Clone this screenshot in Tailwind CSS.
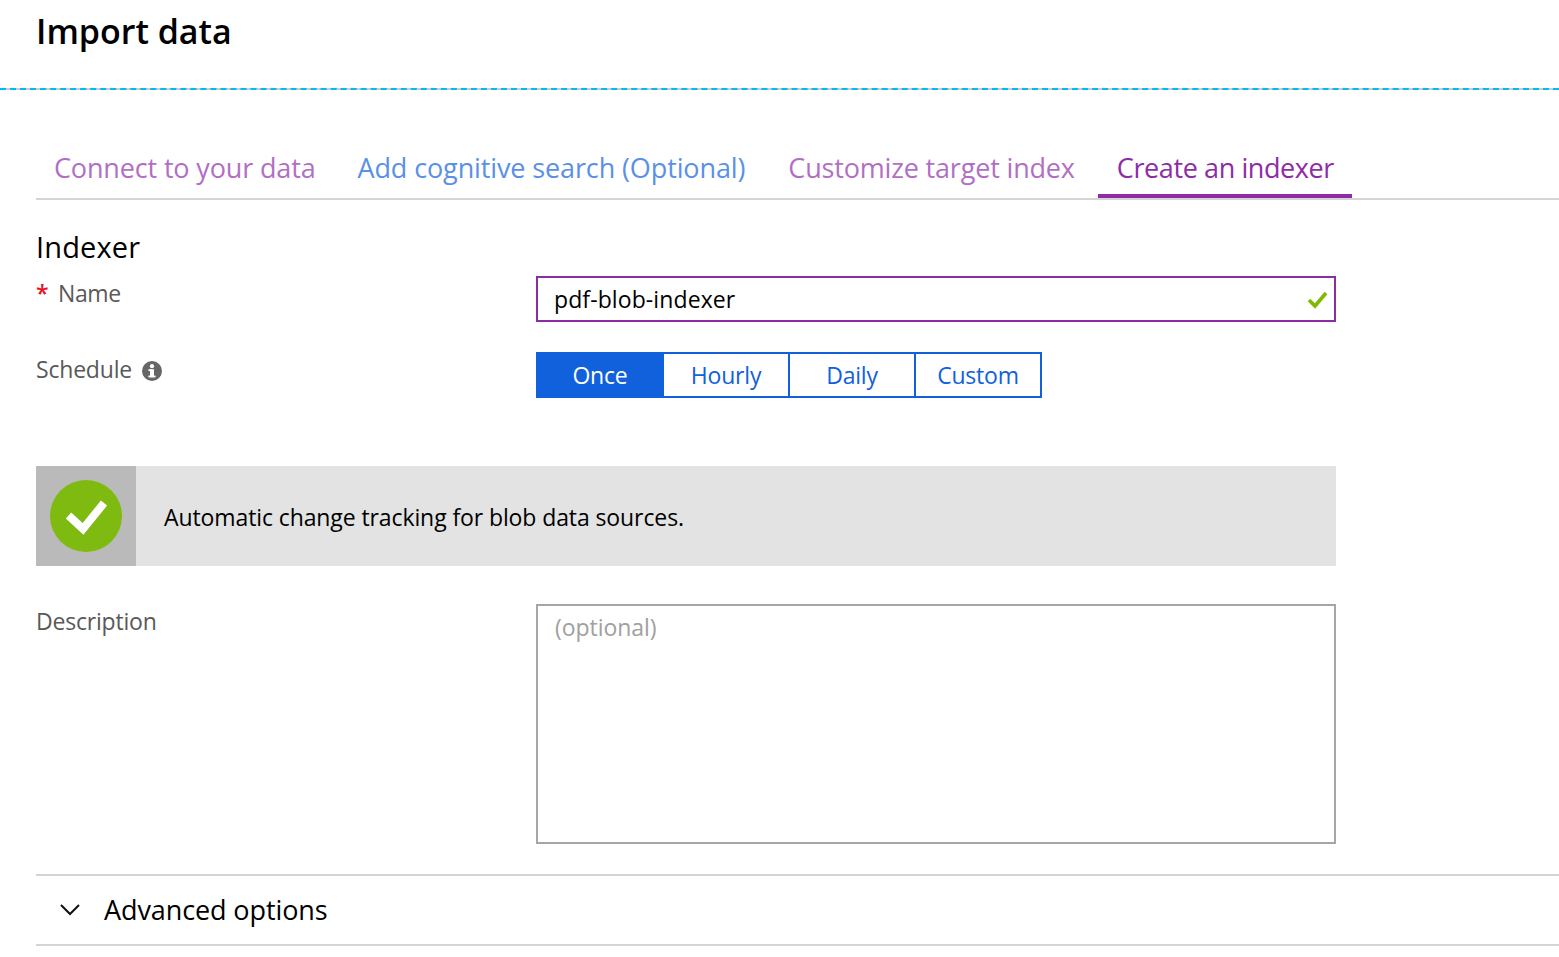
<!DOCTYPE html>
<html lang="en">
<head>
  <meta charset="UTF-8">
  <title>Import data</title>
  <script src="https://cdn.jsdelivr.net/npm/@tailwindcss/browser@4"></script>
</head>
<body class="font-['Open_Sans','Noto_Sans',sans-serif] bg-white text-black overflow-hidden">
  <header class="h-[88px] pl-[36px] pt-[8px]">
    <h1 class="text-[34px] leading-[46px] font-semibold">Import data</h1>
  </header>
  <div class="h-[2px] border-t-[2px] border-dashed border-[#00bcf2] bg-[#cccccc]"></div>

  <main class="pl-[36px]">
    <nav class="mt-[46px] h-[64px] flex items-start border-b-2 border-[#d4d4d4] text-[27px] leading-[40px] tracking-[-0.15px]">
      <a class="h-[62px] pt-[12px] px-[18px] mr-[6px] text-[#b16fc4]" href="#">Connect to your data</a>
      <a class="h-[62px] pt-[12px] px-[18px] mr-[7px] tracking-[-0.12px] text-[#5a90e8]" href="#">Add cognitive search (Optional)</a>
      <a class="h-[62px] pt-[12px] px-[18px] mr-[5px] tracking-[-0.17px] text-[#b16fc4]" href="#">Customize target index</a>
      <a class="h-[62px] pt-[12px] px-[19px] w-[254px] whitespace-nowrap tracking-[-0.4px] text-[#8e2ca6] border-b-4 border-[#8e2ca6]" href="#">Create an indexer</a>
    </nav>

    <h2 class="mt-[25px] text-[29px] leading-[44px] tracking-[0.15px]">Indexer</h2>

    <div class="mt-[7px] flex items-start h-[46px]">
      <label class="w-[500px] flex text-[23px] leading-[28px] tracking-[-0.4px] text-[#595959] pt-[3px]">
        <span class="w-[22px] text-[#e81123] font-semibold">*</span>Name
      </label>
      <div class="relative w-[800px] h-[46px] border-2 border-[#8e2ca6] flex items-center pl-[16px] pt-[1px] text-[23px] tracking-[0.1px] text-black">
        pdf-blob-indexer
        <svg class="absolute right-[5px] top-[13px]" width="22" height="18" viewBox="0 0 22 18"><path d="M2 9l6 6L19 2" fill="none" stroke="#7fba00" stroke-width="3.6"/></svg>
      </div>
    </div>

    <div class="mt-[30px] flex items-start h-[46px]">
      <label class="w-[500px] flex items-center text-[23px] leading-[28px] tracking-[-0.2px] text-[#595959] pt-[3px]">
        Schedule
        <svg class="ml-[10px] mt-[4px]" width="20" height="20" viewBox="0 0 20 20"><circle cx="10" cy="10" r="10" fill="#666"/><rect x="8" y="8.2" width="4" height="8" fill="#fff"/><rect x="6.4" y="8.2" width="3" height="1.8" fill="#fff"/><rect x="6.4" y="14.6" width="7.2" height="1.8" fill="#fff"/><circle cx="10" cy="5.2" r="2.1" fill="#fff"/></svg>
      </label>
      <div class="flex h-[46px] border-2 border-[#1160dc] text-[23px] tracking-[-0.2px] text-[#1160dc]">
        <button class="w-[126px] pr-[2px] bg-[#1160dc] text-white">Once</button>
        <button class="w-[126px] border-r-2 border-[#1160dc]">Hourly</button>
        <button class="w-[126px] border-r-2 border-[#1160dc]">Daily</button>
        <button class="w-[124px]">Custom</button>
      </div>
    </div>

    <div class="mt-[68px] w-[1300px] h-[100px] flex items-center bg-[#e3e3e3]">
      <div class="w-[100px] h-[100px] bg-[#bababa] flex items-center justify-center">
        <svg width="72" height="72" viewBox="0 0 72 72"><circle cx="36" cy="36" r="36" fill="#7fba10"/><path d="M18.5 35.5L33 49 54 23" fill="none" stroke="#fff" stroke-width="8"/></svg>
      </div>
      <p class="pl-[28px] pt-[3px] text-[23px] tracking-[-0.1px]">Automatic change tracking for blob data sources.</p>
    </div>

    <div class="mt-[38px] flex items-start">
      <label class="w-[500px] text-[23px] leading-[28px] tracking-[-0.2px] text-[#595959] pt-[3px]">Description</label>
      <textarea class="w-[800px] h-[240px] border-2 border-[#a6a6a6] pl-[17px] pr-[16px] py-[4px] text-[23px] leading-[34px] tracking-[-0.05px] placeholder:text-[#a0a0a0] resize-none" placeholder="(optional)"></textarea>
    </div>

    <div class="mt-[30px] h-[72px] border-y-2 border-[#d4d4d4] flex items-center pl-[24px] text-[27px] tracking-[-0.1px]">
      <svg class="mr-[24px]" width="20" height="12" viewBox="0 0 20 12"><path d="M1 1l9 9 9-9" fill="none" stroke="#111" stroke-width="2"/></svg>
      Advanced options
    </div>
  </main>
</body>
</html>
